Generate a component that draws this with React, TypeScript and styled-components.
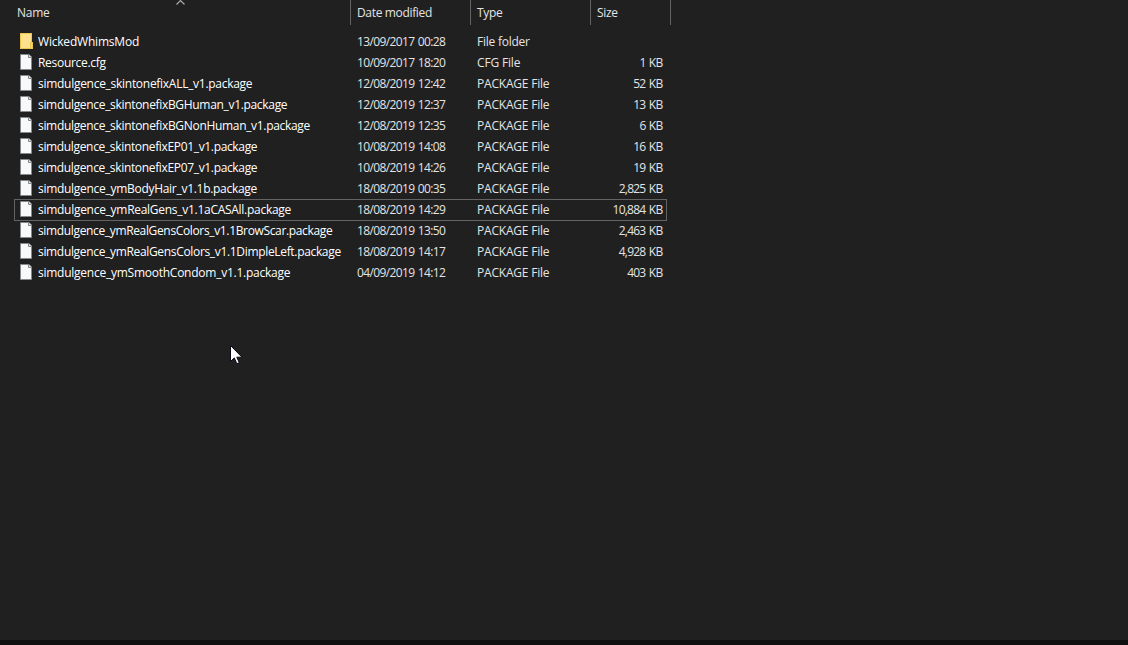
import React from "react";
import styled, { createGlobalStyle } from "styled-components";

const GlobalStyle = createGlobalStyle`
  body { margin: 0; background: #202020; overflow: hidden; }
`;

const Window = styled.main`
  position: relative;
  display: flex;
  flex-direction: column;
  width: 1128px;
  height: 645px;
  background: #202020;
  color: #e4e4e4;
  font-family: "Open Sans", "Noto Sans", sans-serif;
  font-size: 12px;
  line-height: 16px;
  white-space: nowrap;
  cursor: default;
`;

const Header = styled.header`
  display: grid;
  grid-template-columns: 351px 120px 120px 80px;
  height: 25px;
  margin-bottom: 6px;
`;

const HeaderCell = styled.div<{ $first?: boolean; $spacing: number }>`
  position: relative;
  box-sizing: border-box;
  padding: 5px 0 0 ${(p) => (p.$first ? 17 : 6)}px;
  border-right: 1px solid #636363;
  letter-spacing: ${(p) => p.$spacing}px;
`;

const SortArrow = styled.svg`
  position: absolute;
  left: 176px;
  top: 0;
`;

const List = styled.div`
  display: flex;
  flex-direction: column;
  flex: 1;
  padding-left: 14px;
`;

const Row = styled.div<{ $focused?: boolean }>`
  display: grid;
  grid-template-columns: 343px 120px 90px 96px;
  box-sizing: border-box;
  width: 653px;
  height: 21px;
  outline: ${(p) => (p.$focused ? "1px solid #636363" : "none")};
  outline-offset: -1px;
  ${(p) => p.$focused && "height: 22px; margin-bottom: -1px;"}
`;

const NameCell = styled.div`
  display: flex;
  padding: 2px 0 0 6px;
  gap: 5px;
  color: #ffffff;

  svg {
    flex: none;
  }
`;

const Label = styled.span<{ $spacing: number }>`
  padding-top: 1px;
  letter-spacing: ${(p) => p.$spacing}px;
`;

const Cell = styled.div<{ $spacing: number }>`
  padding-top: 3px;
  letter-spacing: ${(p) => p.$spacing}px;
`;

const DateCell = styled.div`
  padding-top: 3px;
  letter-spacing: -0.63px;
  word-spacing: 0.8px;
`;

const SizeCell = styled.div`
  padding: 3px 0.5px 0 0;
  text-align: right;
  letter-spacing: -0.74px;
  word-spacing: 1px;
`;

const BottomEdge = styled.footer`
  height: 5px;
  background: #101010;
`;

const Pointer = styled.svg`
  position: absolute;
  left: 230px;
  top: 345px;
`;

const FolderIcon = () => (
  <svg width="13" height="16" viewBox="0 0 13 16" shapeRendering="crispEdges">
    <path d="M0 0h12v16H0z" fill="#ecc550" />
    <path d="M1 1h10v14H1z" fill="#ffe18d" />
    <path d="M10 9h3v7h-3z" fill="#ecc550" />
    <path d="M11 10h1v5h-1z" fill="#fbd266" />
  </svg>
);

const FileIcon = () => (
  <svg width="13" height="16" viewBox="0 0 13 16">
    <path d="M.5.5h8.5l2.5 2.5v12.5H.5z" fill="#f8f9fa" stroke="#85898c" />
    <path d="M8.5.5v3h3" fill="#dfe1e3" stroke="#85898c" />
  </svg>
);

type Entry = [name: string, nameSpacing: number, date: string, type: string, size: string];

const entries: Entry[] = [
  ["WickedWhimsMod", -0.2, "13/09/2017 00:28", "File folder", ""],
  ["Resource.cfg", -0.3, "10/09/2017 18:20", "CFG File", "1 KB"],
  ["simdulgence_skintonefixALL_v1.package", -0.28, "12/08/2019 12:42", "PACKAGE File", "52 KB"],
  ["simdulgence_skintonefixBGHuman_v1.package", -0.32, "12/08/2019 12:37", "PACKAGE File", "13 KB"],
  ["simdulgence_skintonefixBGNonHuman_v1.package", -0.32, "12/08/2019 12:35", "PACKAGE File", "6 KB"],
  ["simdulgence_skintonefixEP01_v1.package", -0.34, "10/08/2019 14:08", "PACKAGE File", "16 KB"],
  ["simdulgence_skintonefixEP07_v1.package", -0.34, "10/08/2019 14:26", "PACKAGE File", "19 KB"],
  ["simdulgence_ymBodyHair_v1.1b.package", -0.29, "18/08/2019 00:35", "PACKAGE File", "2,825 KB"],
  ["simdulgence_ymRealGens_v1.1aCASAll.package", -0.28, "18/08/2019 14:29", "PACKAGE File", "10,884 KB"],
  ["simdulgence_ymRealGensColors_v1.1BrowScar.package", -0.35, "18/08/2019 13:50", "PACKAGE File", "2,463 KB"],
  ["simdulgence_ymRealGensColors_v1.1DimpleLeft.package", -0.33, "18/08/2019 14:17", "PACKAGE File", "4,928 KB"],
  ["simdulgence_ymSmoothCondom_v1.1.package", -0.25, "04/09/2019 14:12", "PACKAGE File", "403 KB"],
];

const typeSpacing: Record<string, number> = {
  "File folder": -0.24,
  "CFG File": -0.17,
  "PACKAGE File": -0.2,
};

export default function App() {
  return (
    <Window>
      <GlobalStyle />
      <Header>
        <HeaderCell $first $spacing={-0.25}>
          Name
          <SortArrow width="9" height="5" viewBox="0 0 9 5">
            <path d="M.5 4.5l4-4 4 4" fill="none" stroke="#a8a8a8" strokeWidth="1.2" />
          </SortArrow>
        </HeaderCell>
        <HeaderCell $spacing={-0.34}>Date modified</HeaderCell>
        <HeaderCell $spacing={-0.3}>Type</HeaderCell>
        <HeaderCell $spacing={-0.35}>Size</HeaderCell>
      </Header>
      <List>
        {entries.map(([name, spacing, date, type, size], i) => (
          <Row key={name} $focused={i === 8}>
            <NameCell>
              {type === "File folder" ? <FolderIcon /> : <FileIcon />}
              <Label $spacing={spacing}>{name}</Label>
            </NameCell>
            <DateCell>{date}</DateCell>
            <Cell $spacing={typeSpacing[type]}>{type}</Cell>
            <SizeCell>{size}</SizeCell>
          </Row>
        ))}
      </List>
      <BottomEdge />
      <Pointer width="13" height="20" viewBox="0 0 13 20">
        <path d="M.5.5v16l3.8-3.6 2.5 5.8 2.5-1-2.5-5.5H12z" fill="#fff" stroke="#080814" />
      </Pointer>
    </Window>
  );
}
